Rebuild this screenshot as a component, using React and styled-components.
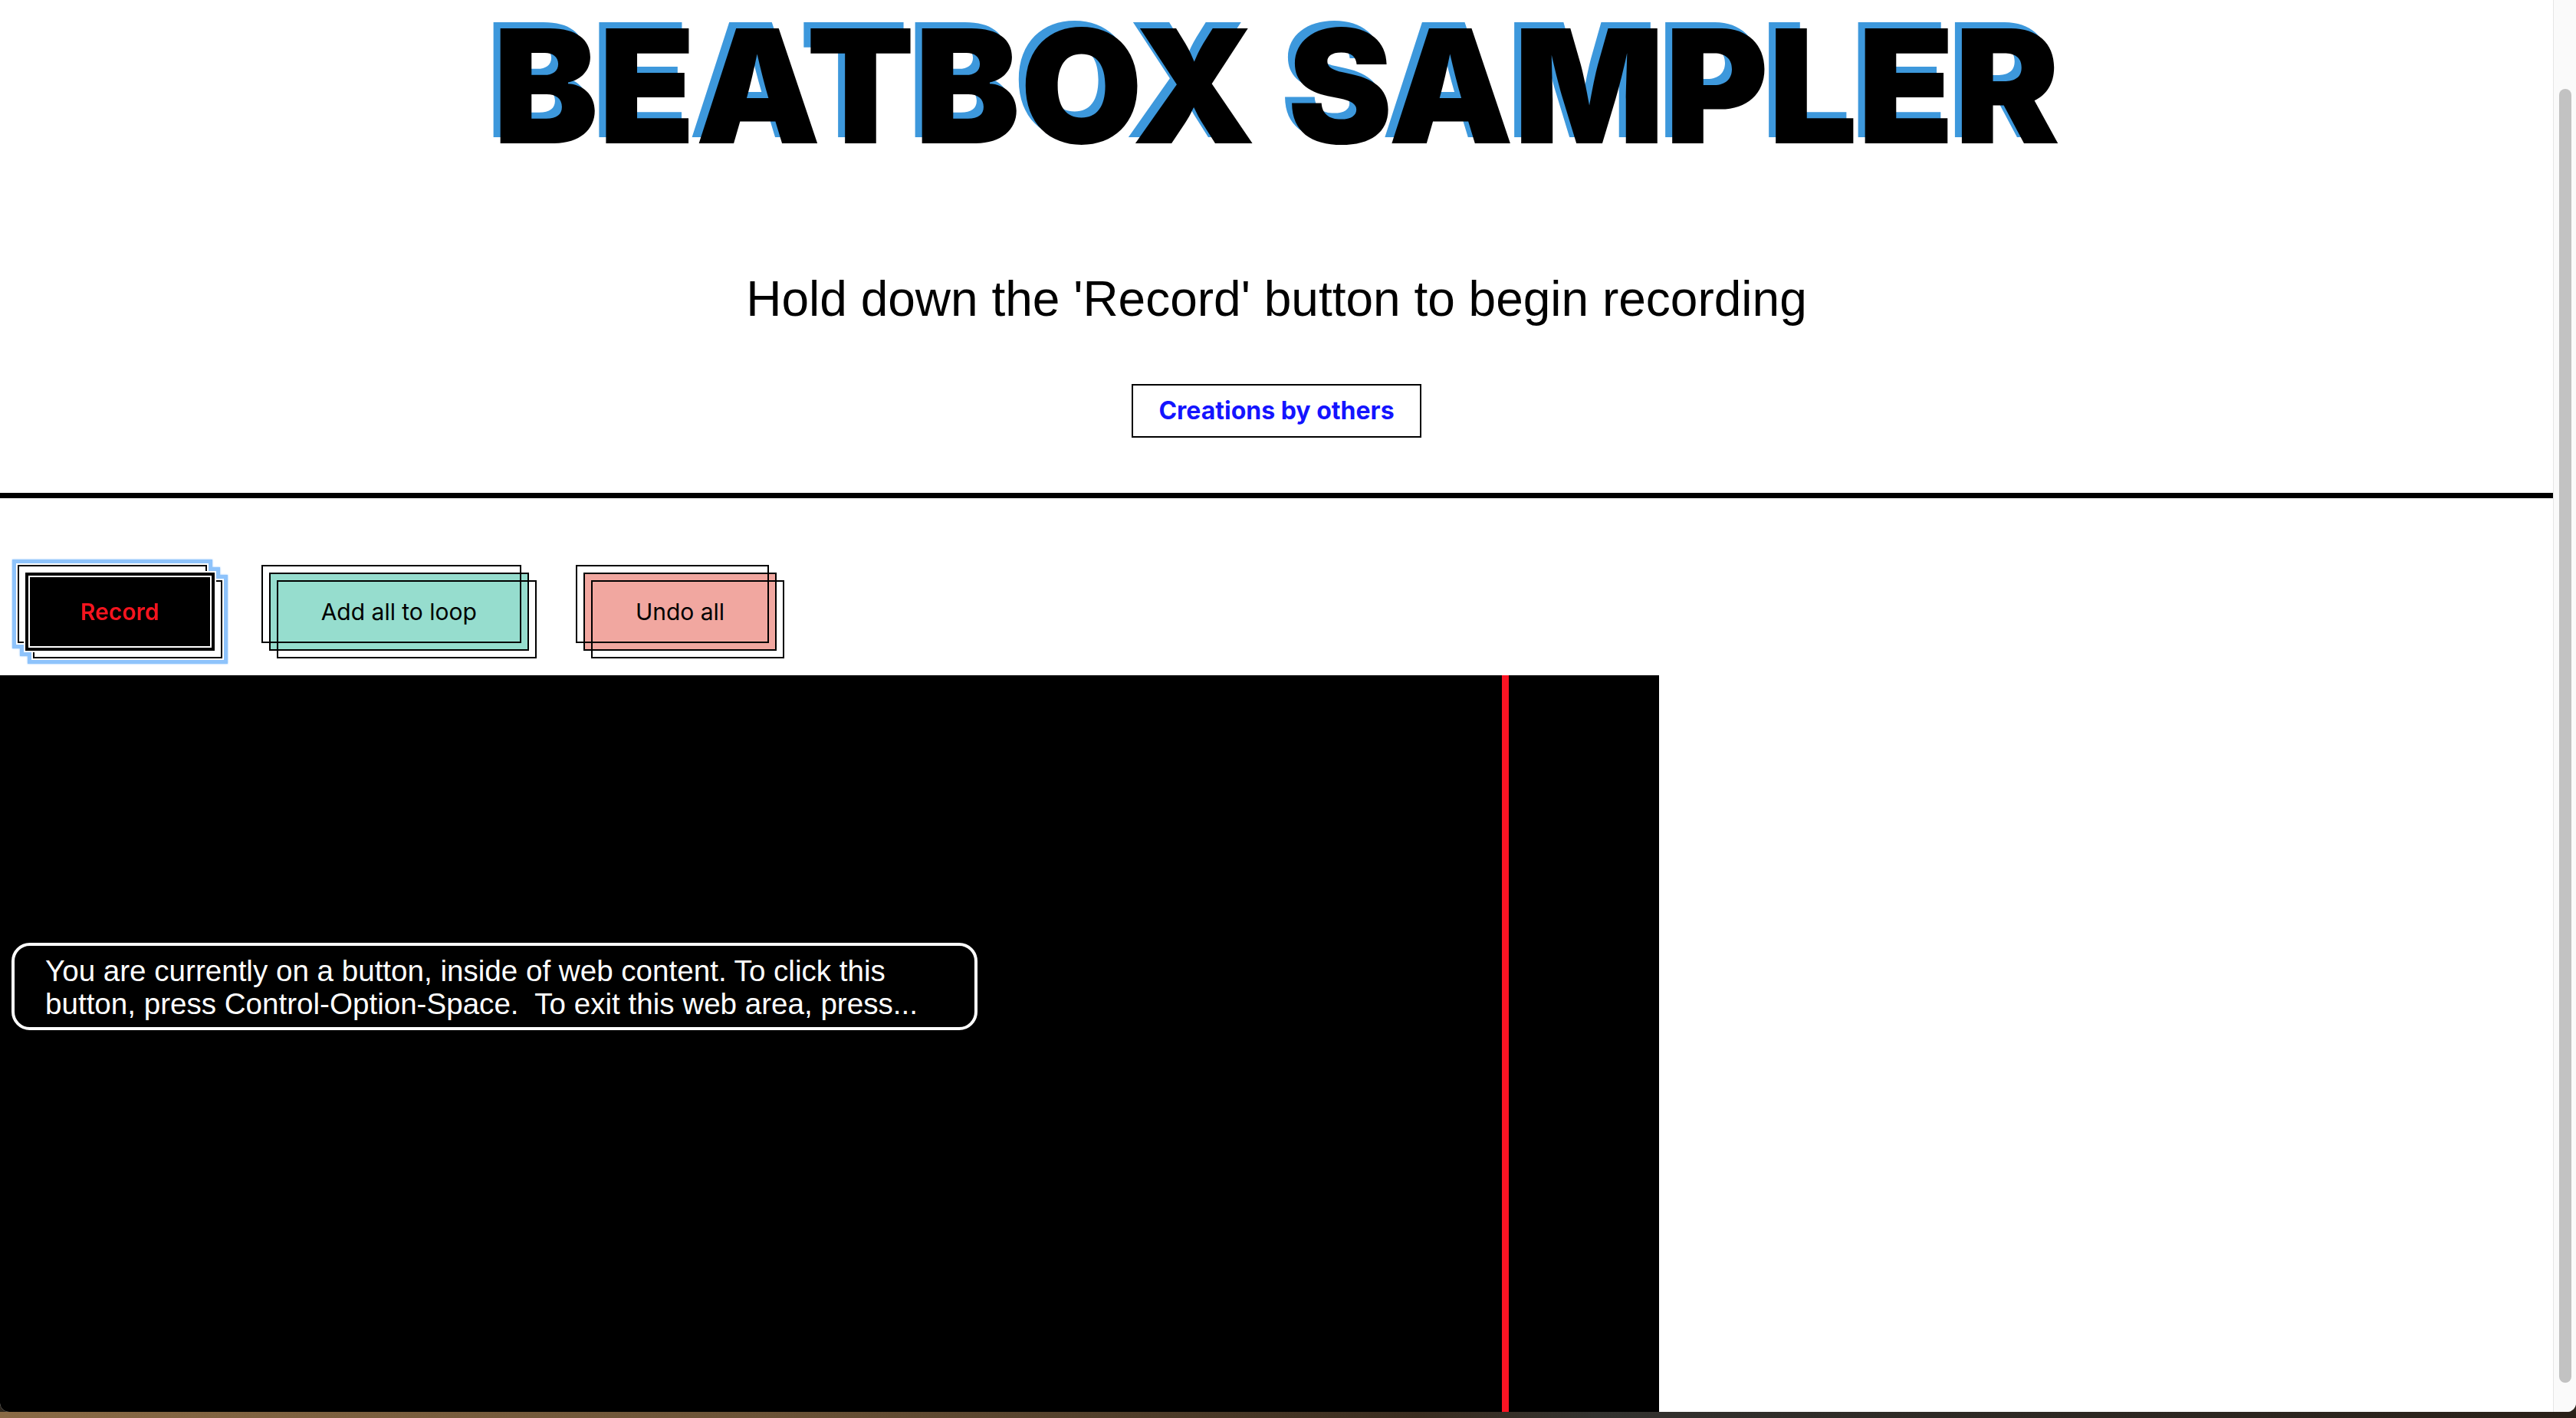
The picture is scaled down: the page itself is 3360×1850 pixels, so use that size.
import React from 'react';
import styled, { createGlobalStyle } from 'styled-components';

const GlobalStyle = createGlobalStyle`
  html, body {
    margin: 0;
    padding: 0;
    background: #2b241c;
  }
  body {
    font-family: Inter, "Liberation Sans", sans-serif;
  }
`;

function LoopButton({ tone, focused, children }) {
  return (
    <ButtonStack focused={focused}>
      <ShadowButton tone={tone} focused={focused}>{children}</ShadowButton>
    </ButtonStack>
  );
}

function App() {
  return (
    <Screen>
      <GlobalStyle />
      <Window>
        <Page>
          <Header>
            <Title>BEATBOX SAMPLER</Title>
            <Subtitle>Hold down the 'Record' button to begin recording</Subtitle>
            <LinkButton>Creations by others</LinkButton>
          </Header>
          <Rule />
          <Controls>
            <LoopButton tone="record" focused>Record</LoopButton>
            <LoopButton tone="add">Add all to loop</LoopButton>
            <LoopButton tone="undo">Undo all</LoopButton>
          </Controls>
          <Workspace>
            <Canvas>
              <Playhead />
            </Canvas>
          </Workspace>
          <Caption>
            You are currently on a button, inside of web content. To click this
            <br />
            button, press Control-Option-Space.&nbsp; To exit this web area, press...
          </Caption>
        </Page>
        <Scrollbar>
          <Thumb />
        </Scrollbar>
      </Window>
      <Desktop />
    </Screen>
  );
}

export default App;

const tones = {
  record: { bg: '#000', color: '#f5141e', weight: 600, pad: 70 },
  add: { bg: '#96ddce', color: '#000', weight: 400, pad: 66 },
  undo: { bg: '#f1a7a0', color: '#000', weight: 400, pad: 66 },
};

const ring = '#8ec3fb';

const Screen = styled.div`
  height: 1850px;
  display: flex;
  flex-direction: column;
  overflow: hidden;
`;
const Window = styled.div`
  flex: 1;
  display: flex;
  background: #fff;
  border-radius: 0 0 12px 12px;
  overflow: hidden;
`;
const Page = styled.main`
  position: relative;
  flex: 1;
  display: flex;
  flex-direction: column;
  min-width: 0;
`;
const Header = styled.header`
  display: flex;
  flex-direction: column;
  align-items: center;
  padding-top: 9px;
`;
const Title = styled.h1`
  margin: 0;
  font-family: Inter, sans-serif;
  font-weight: 900;
  font-size: 206px;
  line-height: 206px;
  color: #000;
  text-shadow: -9px -8px 0 #3d98dc;
`;
const Subtitle = styled.p`
  margin: 138px 0 0;
  font-family: "Liberation Sans", Arial, sans-serif;
  font-size: 64px;
  line-height: 74px;
  color: #000;
`;
const LinkButton = styled.button`
  margin-top: 74px;
  padding: 13px 33px;
  border: 2px solid #000;
  background: #fff;
  font-family: Inter, sans-serif;
  font-weight: 700;
  font-size: 32px;
  line-height: 40px;
  color: #1414ff;
`;
const Rule = styled.hr`
  margin: 72px 0 0;
  border: 0;
  height: 7px;
  background: #000;
`;
const Controls = styled.div`
  display: flex;
  align-items: flex-start;
  gap: 71px;
  padding: 97px 0 32px 33px;
`;
const ButtonStack = styled.div`
  display: flex;
  position: relative;
  isolation: isolate;
  ${(p) =>
    p.focused &&
    `filter: drop-shadow(5px 0 0 ${ring}) drop-shadow(-5px 0 0 ${ring}) drop-shadow(0 5px 0 ${ring}) drop-shadow(0 -5px 0 ${ring}) drop-shadow(0 0 1px ${ring});`}
`;
const ShadowButton = styled.button`
  position: relative;
  height: 102px;
  padding: 0 ${(p) => tones[p.tone].pad}px;
  border: 2px solid #000;
  background: ${(p) => tones[p.tone].bg};
  color: ${(p) => tones[p.tone].color};
  font-family: Inter, sans-serif;
  font-weight: ${(p) => tones[p.tone].weight};
  font-size: 30px;
  ${(p) => p.focused && 'box-shadow: inset 0 0 0 2px #000, inset 0 0 0 4px #fff, 0 0 0 2px #fff;'}

  &::before,
  &::after {
    content: '';
    position: absolute;
    inset: -2px;
    border: 2px solid #000;
    pointer-events: none;
    ${(p) => p.focused && 'z-index: -1; background: #fff; box-shadow: 0 0 0 2px #fff;'}
  }
  &::before {
    transform: translate(-10px, -10px);
  }
  &::after {
    transform: translate(10px, 10px);
  }
`;
const Workspace = styled.section`
  flex: 1;
  display: flex;
`;
const Canvas = styled.div`
  position: relative;
  width: 2164px;
  background: #000;
`;
const Playhead = styled.div`
  position: absolute;
  top: 0;
  bottom: 0;
  left: 1959px;
  width: 9px;
  background: #fb1423;
`;
const Caption = styled.div`
  position: absolute;
  left: 15px;
  top: 1230px;
  width: 1260px;
  box-sizing: border-box;
  padding: 11px 0 0 40px;
  height: 114px;
  border: 4px solid #fff;
  border-radius: 24px;
  background: #000;
  color: #fff;
  font-family: "Liberation Sans", Arial, sans-serif;
  font-size: 38.6px;
  line-height: 43px;
  white-space: nowrap;
`;
const Scrollbar = styled.div`
  width: 29px;
  display: flex;
  justify-content: center;
  padding-top: 116px;
  padding-bottom: 38px;
  background: #fafafa;
  border-left: 1px solid #e6e6e6;
`;
const Thumb = styled.div`
  width: 16px;
  border-radius: 8px;
  background: #c2c2c2;
`;
const Desktop = styled.div`
  height: 8px;
  background: linear-gradient(90deg, #8a6a45 0%, #6b5236 30%, #3a2c1f 55%, #33322f 62%, #2e2a25 75%, #2a2119 100%);
`;
